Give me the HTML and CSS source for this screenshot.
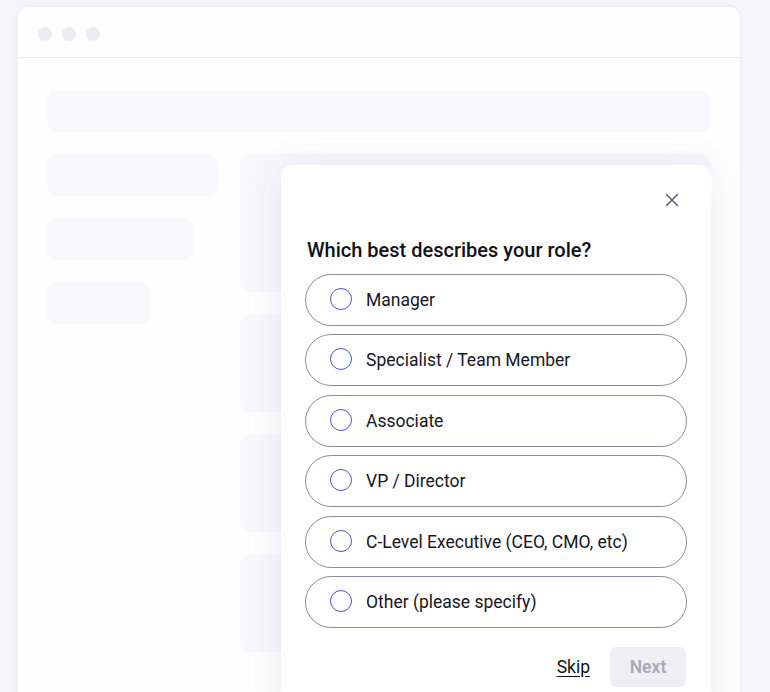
FILE: index.html
```html
<!DOCTYPE html>
<html lang="en">
<head>
  <meta charset="UTF-8">
  <title>Role Survey</title>
  <link rel="stylesheet" href="styles.css">
</head>
<body>
<div class="browser-window">
  <div class="window-bar">
    <span class="dot"></span>
    <span class="dot"></span>
    <span class="dot"></span>
  </div>

  <div class="window-content">
    <div class="skeleton skeleton-bar"></div>
    <div class="skeleton-columns">
      <div class="skeleton-side">
        <div class="skeleton side-1"></div>
        <div class="skeleton side-2"></div>
        <div class="skeleton side-3"></div>
      </div>
      <div class="skeleton-main">
        <div class="skeleton main-1"></div>
        <div class="skeleton main-2"></div>
        <div class="skeleton main-2"></div>
        <div class="skeleton main-2"></div>
      </div>
    </div>

    <div class="survey-modal">
      <div class="modal-top">
        <button class="close-btn" aria-label="Close">
          <svg width="14" height="14" viewBox="0 0 14 14">
            <path d="M1.5 1.5 L12.5 12.5 M12.5 1.5 L1.5 12.5" stroke="#696383" stroke-width="1.6" stroke-linecap="round"/>
          </svg>
        </button>
      </div>

      <h3>Which best describes your role?</h3>

      <div class="option-list">
        <label class="option"><input type="radio" name="role"><span class="radio"></span>Manager</label>
        <label class="option"><input type="radio" name="role"><span class="radio"></span>Specialist / Team Member</label>
        <label class="option"><input type="radio" name="role"><span class="radio"></span>Associate</label>
        <label class="option"><input type="radio" name="role"><span class="radio"></span>VP / Director</label>
        <label class="option"><input type="radio" name="role"><span class="radio"></span>C-Level Executive (CEO, CMO, etc)</label>
        <label class="option"><input type="radio" name="role"><span class="radio"></span>Other (please specify)</label>
      </div>

      <div class="modal-footer">
        <a href="#" class="skip-link">Skip</a>
        <button class="next-btn" disabled>Next</button>
      </div>
    </div>
  </div>
</div>
</body>
</html>
```

FILE: styles.css
```css
body {
  background-color: #f6f5fa;
  font-family: Roboto, 'Noto Sans', sans-serif;
  margin: 0;
  padding: 7px 30px 0 18px;
  height: 692px;
  box-sizing: border-box;
  overflow: hidden;
}

.browser-window {
  width: 722px;
  height: 720px;
  background: #fefefe;
  border-radius: 10px 10px 0 0;
  box-shadow: 0 0 4px rgba(40, 30, 90, 0.07);
  overflow: hidden;
}

.window-bar {
  height: 51px;
  box-sizing: border-box;
  padding: 20px 0 0 20px;
  display: flex;
  gap: 10px;
  border-bottom: 1px solid #ecebf1;
}

.dot {
  width: 14px;
  height: 14px;
  border-radius: 50%;
  background: #eeedf3;
}

.window-content {
  position: relative;
  padding: 33px 29px 0 29px;
}

.skeleton {
  background: #f8f7fc;
  border-radius: 10px;
}

.skeleton-bar {
  height: 41px;
}

.skeleton-columns {
  display: flex;
  gap: 22px;
  margin-top: 22px;
}

.skeleton-side {
  width: 171px;
  display: flex;
  flex-direction: column;
  gap: 22px;
}

.skeleton-side .skeleton {
  height: 42px;
}

.side-2 {
  width: 146px;
}

.side-3 {
  width: 103px;
}

.skeleton-main {
  flex: 1;
  display: flex;
  flex-direction: column;
  gap: 23px;
}

.main-1 {
  height: 138px;
}

.main-2 {
  height: 97px;
}

/* overlay card */
.survey-modal {
  position: absolute;
  left: 263px;
  top: 107px;
  width: 430px;
  height: 560px;
  box-sizing: border-box;
  padding: 24px 24px 0 24px;
  background: #ffffff;
  border-radius: 12px;
  box-shadow: 0 0 40px rgba(70, 60, 140, 0.09);
}

.modal-top {
  display: flex;
  justify-content: flex-end;
  height: 22px;
}

.close-btn {
  width: 22px;
  height: 22px;
  padding: 0;
  margin-right: 4px;
  border: none;
  background: none;
  display: flex;
  align-items: center;
  justify-content: center;
  cursor: pointer;
}

h3 {
  margin: 27px 0 12px 2px;
  font-size: 20px;
  line-height: 24px;
  font-weight: 500;
  color: #111118;
}

.option-list {
  display: flex;
  flex-direction: column;
  gap: 8.4px;
}

.option {
  display: flex;
  align-items: center;
  height: 52px;
  box-sizing: border-box;
  padding-left: 24px;
  border: 1.2px solid #8e8aa2;
  border-radius: 26px;
  font-size: 17.5px;
  color: #16161f;
  cursor: pointer;
}

.option input {
  display: none;
}

.radio {
  width: 22px;
  height: 22px;
  box-sizing: border-box;
  border: 1.6px solid #4c58c2;
  border-radius: 50%;
  margin-right: 14px;
  margin-bottom: 2px;
}

.modal-footer {
  display: flex;
  justify-content: flex-end;
  align-items: center;
  gap: 20px;
  margin: 19px 1px 0 0;
}

.skip-link {
  color: #111118;
  font-size: 17.5px;
  text-decoration: underline;
  text-underline-offset: 3px;
}

.next-btn {
  width: 76px;
  height: 40px;
  border: none;
  border-radius: 6px;
  background: #efeef4;
  color: #a9a9bb;
  font-family: Roboto, sans-serif;
  font-size: 17.5px;
  font-weight: 600;
}
```
